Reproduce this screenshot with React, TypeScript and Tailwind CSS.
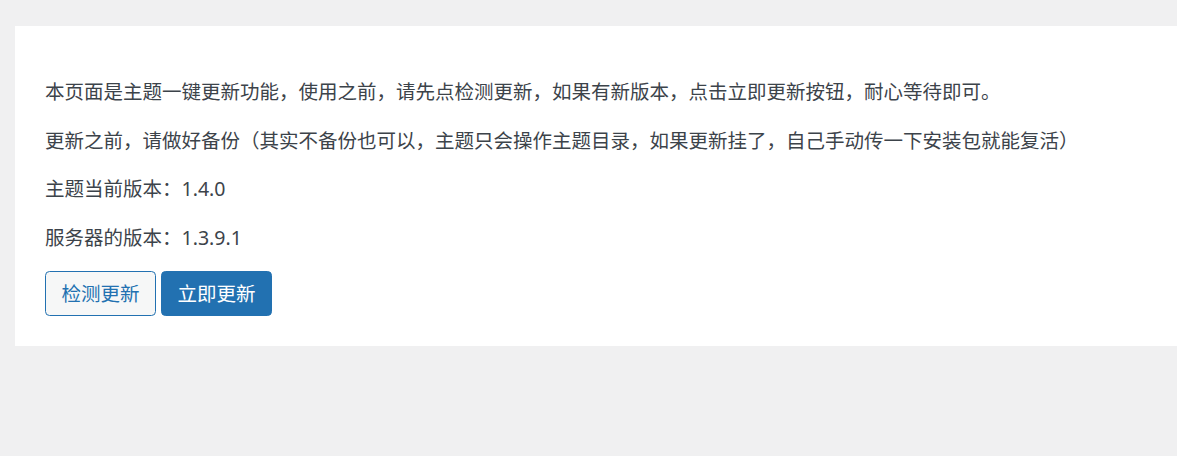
export default function App() {
  const font = { fontFamily: '"Noto Sans", "Noto Sans CJK SC", sans-serif' };
  return (
    <div className="min-h-[456px] bg-[#f0f0f1] pt-[26px] pl-[15px]" style={font}>
      <div className="bg-white pt-[31px] pb-[30px] px-[30px] text-[#3c434a] text-[19.5px] leading-[29px]">
        <div className="flex flex-col gap-[19.5px] pt-[20px]">
          <p>本页面是主题一键更新功能，使用之前，请先点检测更新，如果有新版本，点击立即更新按钮，耐心等待即可。</p>
          <p>更新之前，请做好备份（其实不备份也可以，主题只会操作主题目录，如果更新挂了，自己手动传一下安装包就能复活）</p>
          <p>主题当前版本：1.4.0</p>
          <p>服务器的版本：1.3.9.1</p>
        </div>
        <div className="flex gap-[5px] mt-[19px]">
          <button className="h-[45px] px-[15.5px] rounded-[4.5px] border border-[#2271b1] bg-[#f6f7f7] text-[#2271b1]">
            检测更新
          </button>
          <button className="h-[45px] px-[15.5px] rounded-[4.5px] border border-[#2271b1] bg-[#2271b1] text-white">
            立即更新
          </button>
        </div>
      </div>
    </div>
  );
}
